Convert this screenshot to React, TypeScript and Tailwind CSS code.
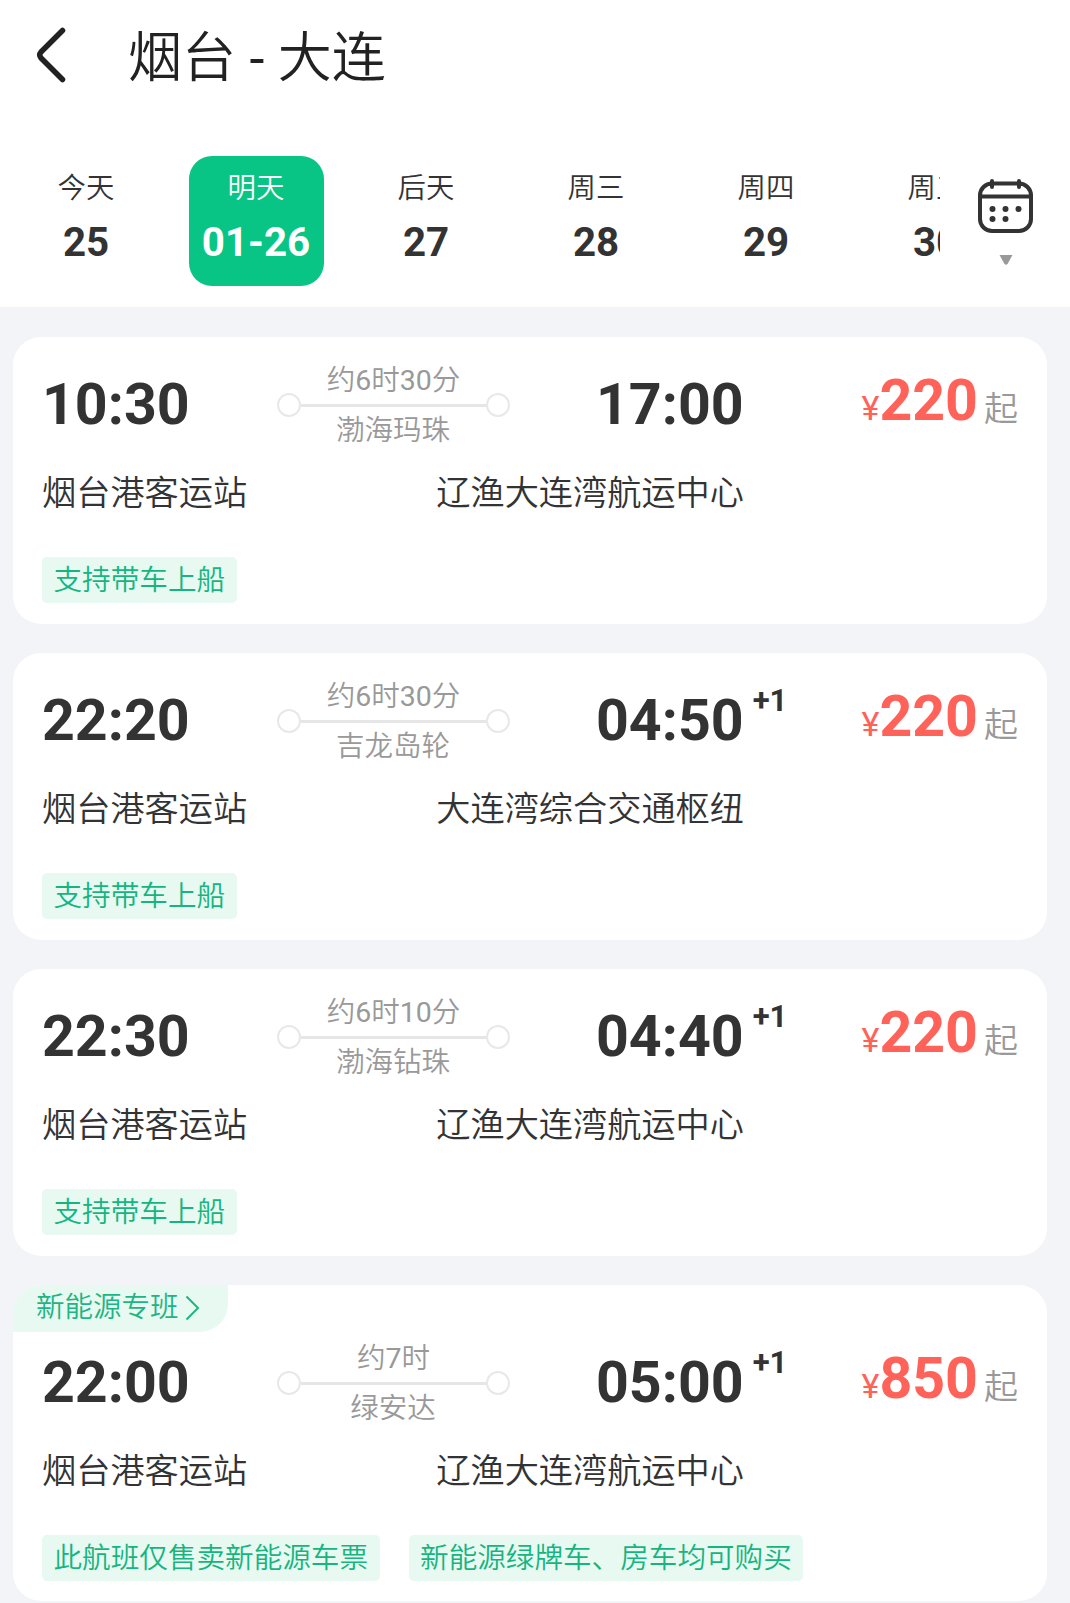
interface Day {
  label: string;
  date: string;
}

interface Sailing {
  id: number;
  depart: string;
  arrive: string;
  nextDay: boolean;
  duration: string;
  ship: string;
  from: string;
  to: string;
  price: number;
  tags: string[];
  badge?: string;
}

const days: Day[] = [
  { label: "今天", date: "25" },
  { label: "明天", date: "01-26" },
  { label: "后天", date: "27" },
  { label: "周三", date: "28" },
  { label: "周四", date: "29" },
  { label: "周五", date: "30" },
];

const sailings: Sailing[] = [
  {
    id: 1,
    depart: "10:30",
    arrive: "17:00",
    nextDay: false,
    duration: "约6时30分",
    ship: "渤海玛珠",
    from: "烟台港客运站",
    to: "辽渔大连湾航运中心",
    price: 220,
    tags: ["支持带车上船"],
  },
  {
    id: 2,
    depart: "22:20",
    arrive: "04:50",
    nextDay: true,
    duration: "约6时30分",
    ship: "吉龙岛轮",
    from: "烟台港客运站",
    to: "大连湾综合交通枢纽",
    price: 220,
    tags: ["支持带车上船"],
  },
  {
    id: 3,
    depart: "22:30",
    arrive: "04:40",
    nextDay: true,
    duration: "约6时10分",
    ship: "渤海钻珠",
    from: "烟台港客运站",
    to: "辽渔大连湾航运中心",
    price: 220,
    tags: ["支持带车上船"],
  },
  {
    id: 4,
    depart: "22:00",
    arrive: "05:00",
    nextDay: true,
    duration: "约7时",
    ship: "绿安达",
    from: "烟台港客运站",
    to: "辽渔大连湾航运中心",
    price: 850,
    tags: ["此航班仅售卖新能源车票", "新能源绿牌车、房车均可购买"],
    badge: "新能源专班",
  },
];

function CalendarIcon() {
  return (
    <svg width="56" height="56" viewBox="0 0 56 56" fill="none" stroke="#333" strokeWidth="4">
      <rect x="3" y="5.5" width="51" height="47.5" rx="12" />
      <path d="M3 18.5H54" />
      <path d="M15 3V9M42 3V9" strokeLinecap="round" />
      <g fill="#333" stroke="none">
        <circle cx="15.5" cy="31" r="3" />
        <circle cx="28.5" cy="31" r="3" />
        <circle cx="41.5" cy="31" r="3" />
        <circle cx="15.5" cy="41" r="3" />
        <circle cx="28.5" cy="41" r="3" />
      </g>
    </svg>
  );
}

function Route({ duration, ship }: { duration: string; ship: string }) {
  return (
    <div className="w-[233px] h-[90px] pt-px flex flex-col items-center text-[28.5px] leading-[37px] text-[#999]">
      <span>{duration}</span>
      <div className="w-full h-6 -my-[6px] flex items-center">
        <span className="size-6 rounded-full border-2 border-[#e8e8e8]" />
        <span className="flex-1 h-[3px] bg-[#e6e6e6]" />
        <span className="size-6 rounded-full border-2 border-[#e8e8e8]" />
      </div>
      <span className="pt-px pr-px">{ship}</span>
    </div>
  );
}

function SailingCard({ s }: { s: Sailing }) {
  return (
    <div className="bg-white rounded-[28px] overflow-hidden">
      {s.badge && (
        <div className="w-[215px] h-[47px] -mb-[17px] pl-[23px] flex items-center bg-[#e7f9f1] rounded-br-[28px] text-[28.5px] text-[#1db584]">
          {s.badge}
          <svg className="ml-[6px] -mt-[2px]" width="15" height="26" viewBox="0 0 15 26" fill="none" stroke="#1db584" strokeWidth="2">
            <path d="M1.5 1.5L13 13L1.5 24.5" />
          </svg>
        </div>
      )}
      <div className={s.badge ? "h-[286px] px-[29px] pt-[24px]" : "h-[287px] px-[29px] pt-[24px]"}>
        <div className="flex h-[98px]">
          <span className="w-[235px] pt-[11px] text-[57.3px] leading-[66px] font-bold">{s.depart}</span>
          <Route duration={s.duration} ship={s.ship} />
          <div className="ml-[86px] flex pt-[11px] font-bold">
            <span className="text-[57.3px] leading-[66px]">{s.arrive}</span>
            {s.nextDay && <span className="ml-[9px] text-[31px] leading-[35px] -mt-[5px]">+1</span>}
          </div>
          <div className="ml-auto flex items-baseline h-[66px] pt-[7px] text-[34px] leading-[66px] text-[#ff6259]">
            <span>¥</span>
            <span className="text-[57.3px] font-bold">{s.price}</span>
            <span className="ml-[6px] relative top-px text-[#999]">起</span>
          </div>
        </div>
        <div className="w-[702px] mt-[12px] flex justify-between text-[34.2px] leading-[44px]">
          <span>{s.from}</span>
          <span>{s.to}</span>
        </div>
        <div className="mt-[42px] flex gap-[29px]">
          {s.tags.map((t) => (
            <span key={t} className="h-[46px] px-[11.5px] rounded-[5px] bg-[#e8f9f2] text-[28.6px] leading-[47px] text-[#16b57f]">
              {t}
            </span>
          ))}
        </div>
      </div>
    </div>
  );
}

export default function App() {
  return (
    <div className="w-[1070px] h-[1603px] overflow-hidden bg-[#f2f4f8] text-[#333] font-[Roboto,'Noto_Sans_CJK_SC_DemiLight','Noto_Sans_CJK_SC',sans-serif] whitespace-nowrap">
      <header className="h-[307px] bg-white">
        <div className="h-[110px] flex items-center pl-[36px]">
          <svg width="30" height="56" viewBox="0 0 30 56" fill="none" stroke="#222" strokeWidth="5.5" strokeLinecap="round" strokeLinejoin="round">
            <path d="M26.5 3.5L5 25Q2.5 28 5 31L26.5 52.5" />
          </svg>
          <h1 className="ml-[62px] pt-[7px] text-[54px] leading-[70px] text-[#222]">烟台 - 大连</h1>
        </div>
        <div className="mt-[46px] flex">
          <div className="w-[940px] pl-px flex overflow-hidden">
            {days.map((d, i) => (
              <div key={d.date} className="w-[170px] shrink-0 flex justify-center">
                <div
                  className={
                    i === 1
                      ? "w-[135px] h-[130px] rounded-[23px] bg-[#09c585] text-white text-center"
                      : "w-[135px] h-[130px] text-center"
                  }
                >
                  <div className="pt-[14px] text-[28.4px] leading-[38px]">{d.label}</div>
                  <div className="mt-[12px] text-[40.3px] leading-[46px] font-bold">{d.date}</div>
                </div>
              </div>
            ))}
          </div>
          <div className="flex-1 flex flex-col items-center pt-[22px]">
            <CalendarIcon />
            <svg className="mt-[21px] ml-px" width="14" height="10" viewBox="0 0 14 10" fill="#999">
              <path d="M0.5 0H13.5L8.5 9Q7 10.5 5.5 9Z" />
            </svg>
          </div>
        </div>
      </header>
      <main className="pt-[30px] pl-[13px] pr-[23px] flex flex-col gap-[29px]">
        {sailings.map((s) => (
          <SailingCard key={s.id} s={s} />
        ))}
      </main>
    </div>
  );
}
